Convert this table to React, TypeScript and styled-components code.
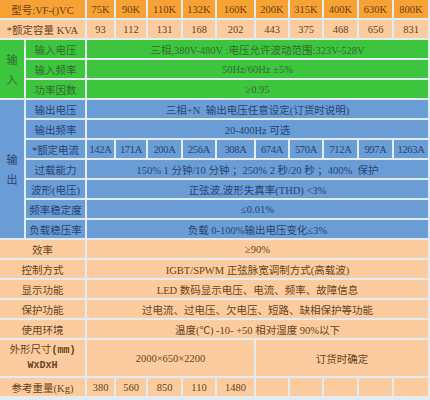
import React from "react";
import styled, { createGlobalStyle, css } from "styled-components";

type Tone = "head" | "peach" | "green" | "blue";

const tones: Record<Tone, { bg: string; fg: string }> = {
  head: { bg: "#f6a235", fg: "#6e3f12" },
  peach: { bg: "#fccc9e", fg: "#654323" },
  green: { bg: "#3ec53e", fg: "#326a32" },
  blue: { bg: "#6a9cd6", fg: "#27446f" },
};

const models = ["75K", "90K", "110K", "132K", "160K", "200K", "315K", "400K", "630K", "800K"];
const capacity = ["93", "112", "131", "168", "202", "443", "375", "468", "656", "831"];
const current = ["142A", "171A", "200A", "256A", "308A", "674A", "570A", "712A", "997A", "1263A"];
const weights = ["380", "560", "850", "110", "1480", "", "", "", "", ""];

const inputRows: [string, string][] = [
  ["输入电压", "三相,380V-480V :电压允许波动范围:323V-528V"],
  ["输入频率", "50Hz/60Hz ±5%"],
  ["功率因数", "≥0.95"],
];

const commonRows: [string, string][] = [
  ["效率", "≥90%"],
  ["控制方式", "IGBT/SPWM 正弦脉宽调制方式(高载波)"],
  ["显示功能", "LED 数码显示电压、电流、频率、故障信息"],
  ["保护功能", "过电流、过电压、欠电压、短路、缺相保护等功能"],
  ["使用环境", "温度(℃) -10- +50  相对湿度 90%以下"],
];

const App: React.FC = () => {
  return (
    <>
      <GlobalStyle />
      <Table>
        <Cell tone="head" span={2}>
          型号:VF-()VC
        </Cell>
        {models.map((m) => (
          <Cell key={m} tone="head">
            {m}
          </Cell>
        ))}

        <Cell tone="peach" span={2}>
          *额定容量 KVA
        </Cell>
        {capacity.map((c, i) => (
          <Cell key={i} tone="peach">
            {c}
          </Cell>
        ))}

        <Section tone="green" rows={3}>
          <span>输</span>
          <span>入</span>
        </Section>
        {inputRows.map(([label, value]) => (
          <React.Fragment key={label}>
            <Cell tone="green">{label}</Cell>
            <Cell tone="green" span={10}>
              {value}
            </Cell>
          </React.Fragment>
        ))}

        <Section tone="blue" rows={7}>
          <span>输</span>
          <span>出</span>
        </Section>
        <Cell tone="blue">输出电压</Cell>
        <Cell tone="blue" span={10}>
          三相+N&nbsp; 输出电压任意设定(订货时说明)
        </Cell>
        <Cell tone="blue">输出频率</Cell>
        <Cell tone="blue" span={10}>
          20-400Hz 可选
        </Cell>
        <Cell tone="blue">*额定电流</Cell>
        {current.map((c) => (
          <Cell key={c} tone="blue" tight>
            {c}
          </Cell>
        ))}
        <Cell tone="blue">过载能力</Cell>
        <Cell tone="blue" span={10}>
          150% 1 分钟/10 分钟 ；250% 2 秒/20 秒 ；400%&nbsp; 保护
        </Cell>
        <Cell tone="blue">波形(电压)</Cell>
        <Cell tone="blue" span={10}>
          正弦波,波形失真率(THD) &lt;3%
        </Cell>
        <Cell tone="blue">频率稳定度</Cell>
        <Cell tone="blue" span={10}>
          ≤0.01%
        </Cell>
        <Cell tone="blue">负载稳压率</Cell>
        <Cell tone="blue" span={10}>
          负载 0-100%输出电压变化≤3%
        </Cell>

        {commonRows.map(([label, value]) => (
          <React.Fragment key={label}>
            <Cell tone="peach" span={2}>
              {label}
            </Cell>
            <Cell tone="peach" span={10}>
              {value}
            </Cell>
          </React.Fragment>
        ))}

        <Cell tone="peach" span={2}>
          <SizeLabel>
            <span>
              外形尺寸<Mono>(mm)</Mono>
            </span>
            <Mono>WxDxH</Mono>
          </SizeLabel>
        </Cell>
        <Cell tone="peach" span={5}>
          2000×650×2200
        </Cell>
        <Cell tone="peach" span={5}>
          订货时确定
        </Cell>

        <Cell tone="peach" span={2}>
          参考重量(Kg)
        </Cell>
        {weights.map((w, i) => (
          <Cell key={i} tone="peach">
            {w}
          </Cell>
        ))}
      </Table>
    </>
  );
};

const GlobalStyle = createGlobalStyle`
  html, body {
    margin: 0;
    padding: 0;
    background: #ffffff;
  }
`;

const Table = styled.div`
  display: grid;
  width: 430px;
  box-sizing: border-box;
  grid-template-columns: 24px 59px 27px 30px 33px 32px 37px 32px 32px 33px 33px 34px;
  grid-template-rows: repeat(17, 18px) 36px 18px;
  gap: 2px;
  padding: 0 2px 4px 0;
  background: #e3ecf1;
  font-family: "Liberation Serif", "Noto Sans CJK SC", serif;
  font-size: 10.5px;
`;

const Cell = styled.div<{ tone: Tone; span?: number; tight?: boolean }>`
  display: flex;
  align-items: center;
  justify-content: center;
  white-space: nowrap;
  overflow: hidden;
  background: ${({ tone }) => tones[tone].bg};
  color: ${({ tone }) => tones[tone].fg};
  ${({ span }) =>
    span &&
    css`
      grid-column: span ${span};
    `}
  ${({ tight }) =>
    tight &&
    css`
      letter-spacing: -0.3px;
    `}
`;

const Section = styled.div<{ tone: Tone; rows: number }>`
  grid-row: span ${({ rows }) => rows};
  display: flex;
  flex-direction: column;
  align-items: center;
  justify-content: center;
  gap: 4px;
  font-size: 11px;
  background: ${({ tone }) => tones[tone].bg};
  color: ${({ tone }) => tones[tone].fg};
`;

const SizeLabel = styled.div`
  display: flex;
  flex-direction: column;
  align-items: center;
  gap: 5px;
  line-height: 1;
`;

const Mono = styled.span`
  font-family: "Liberation Mono", monospace;
  font-weight: bold;
  font-size: 10px;
`;

export default App;
